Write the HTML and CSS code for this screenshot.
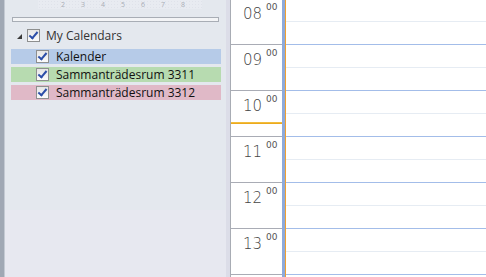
FILE: index.html
```html
<!DOCTYPE html>
<html>
<head>
  <title>Calendar</title>
  <link rel="stylesheet" href="styles.css">
</head>
<body>
  <div class="app">
    <div class="edge"></div>

    <!-- navigation pane -->
    <div class="nav">
      <div class="nav-top">
        <div class="minical">
          <div class="minical-days">
            <span>2</span><span>3</span><span>4</span><span>5</span><span>6</span><span>7</span><span>8</span>
          </div>
        </div>
        <div class="scrollbar"></div>

        <div class="group">
          <span class="twisty"></span>
          <span class="check"></span>
          <span class="group-name">My Calendars</span>
        </div>
        <div class="cal blue"><span class="check"></span><span>Kalender</span></div>
        <div class="cal green"><span class="check"></span><span>Sammanträdesrum 3311</span></div>
        <div class="cal pink"><span class="check"></span><span>Sammanträdesrum 3312</span></div>
      </div>
      <div class="nav-bottom"></div>
    </div>
    <div class="splitter"></div>

    <!-- day view -->
    <div class="times">
      <div class="times-inner">
        <div class="hour"><span class="h">08</span><span class="m">00</span></div>
        <div class="hour"><span class="h">09</span><span class="m">00</span></div>
        <div class="hour now"><span class="h">10</span><span class="m">00</span><div class="now-line"></div></div>
        <div class="hour"><span class="h">11</span><span class="m">00</span></div>
        <div class="hour"><span class="h">12</span><span class="m">00</span></div>
        <div class="hour"><span class="h">13</span><span class="m">00</span></div>
      </div>
    </div>
    <div class="daybar"></div>
    <div class="grid">
      <div class="grid-inner">
        <div class="slot"><div class="half"></div></div>
        <div class="slot"><div class="half"></div></div>
        <div class="slot"><div class="half"></div></div>
        <div class="slot"><div class="half"></div></div>
        <div class="slot"><div class="half"></div></div>
        <div class="slot"><div class="half"></div></div>
      </div>
    </div>
  </div>
</body>
</html>
```

FILE: styles.css
```css
html, body {
  margin: 0;
  padding: 0;
  height: 100%;
  overflow: hidden;
  font-family: "Open Sans", "Noto Sans", Arial, sans-serif;
}

.app {
  display: flex;
  height: 277px;
  width: 486px;
  background: #fff;
}

.edge {
  width: 4px;
  background: #a0a8b4;
  border-right: 1px solid #c4cad3;
}

/* navigation pane */
.nav {
  width: 221px;
  display: flex;
  flex-direction: column;
}

.nav-top {
  height: 210px;
  background: #e4e8ee;
  padding-left: 6px;
}

.nav-bottom {
  flex: 1;
  background: #e7e8f0;
}

.minical {
  margin-left: 27px;
  width: 164px;
  height: 9px;
  background-color: #e8ebf1;
  background-image: radial-gradient(#dfe2ea 0.6px, transparent 0.7px);
  background-size: 3px 3px;
}

.minical-days {
  display: flex;
  padding-left: 23px;
  font-size: 7px;
  line-height: 9px;
  color: #a9adb6;
}

.minical-days span {
  width: 20px;
}

.scrollbar {
  margin: 8px 0 0 1px;
  width: 205px;
  height: 3px;
  border: 1px solid #a8adb5;
  background: #f3f4f6;
}

.group {
  display: flex;
  align-items: center;
  height: 13px;
  margin-top: 7px;
  font-size: 12px;
  color: #333;
}

.twisty {
  width: 0;
  height: 0;
  margin: 2px 5px 0 6px;
  border-left: 5px solid transparent;
  border-bottom: 5px solid #3a3a3a;
}

.check {
  position: relative;
  width: 11px;
  height: 11px;
  border: 1px solid #8e8f8f;
  background: linear-gradient(#e6e6e6, #fbfbfb);
  flex-shrink: 0;
}

.check::after {
  content: "";
  position: absolute;
  left: 3px;
  top: 0px;
  width: 3px;
  height: 7px;
  border-right: 2px solid #2c4ea8;
  border-bottom: 2px solid #2c4ea8;
  transform: rotate(40deg);
}

.group-name {
  margin-left: 6px;
}

.cal {
  display: flex;
  align-items: center;
  height: 15px;
  margin-top: 3px;
  width: 210px;
  font-size: 12px;
  color: #111;
}

.group + .cal {
  margin-top: 7px;
}

.cal .check {
  margin: 0 7px 0 25px;
}

.blue { background: #b6cbe8; }
.green { background: #b7dbb0; }
.pink { background: #e0b9c7; }

.splitter {
  width: 4px;
  background-color: #dcdde8;
  background-image: radial-gradient(#cfd0de 0.6px, transparent 0.7px);
  background-size: 2px 2px;
}

/* day view */
.times {
  width: 51px;
  border-left: 1px solid #a8acb4;
  background: #fff;
  overflow: hidden;
}

.times-inner,
.grid-inner {
  margin-top: -1px;
}

.hour {
  position: relative;
  height: 45px;
  border-bottom: 1px solid #a9acb5;
  display: flex;
  align-items: flex-start;
  padding-left: 12px;
  color: #444;
  font-family: "DejaVu Sans", sans-serif;
  font-weight: 200;
}

.h {
  font-size: 15px;
  line-height: 15px;
  margin-top: 8px;
}

.m {
  font-size: 9px;
  line-height: 9px;
  margin: 4px 0 0 4px;
  font-weight: 400;
  color: #555;
}

.now-line {
  position: absolute;
  left: 0;
  right: 0;
  top: 31px;
  height: 2px;
  background: linear-gradient(#f6c64a, #e7a00f);
}

.daybar {
  width: 3px;
  background: #8eaadb;
  border-right: 1px solid #f0a030;
}

.grid {
  flex: 1;
  overflow: hidden;
}

.slot {
  height: 45px;
  border-bottom: 1px solid #a3bde9;
}

.half {
  height: 22px;
  border-bottom: 1px solid #e6ecf3;
}
```
